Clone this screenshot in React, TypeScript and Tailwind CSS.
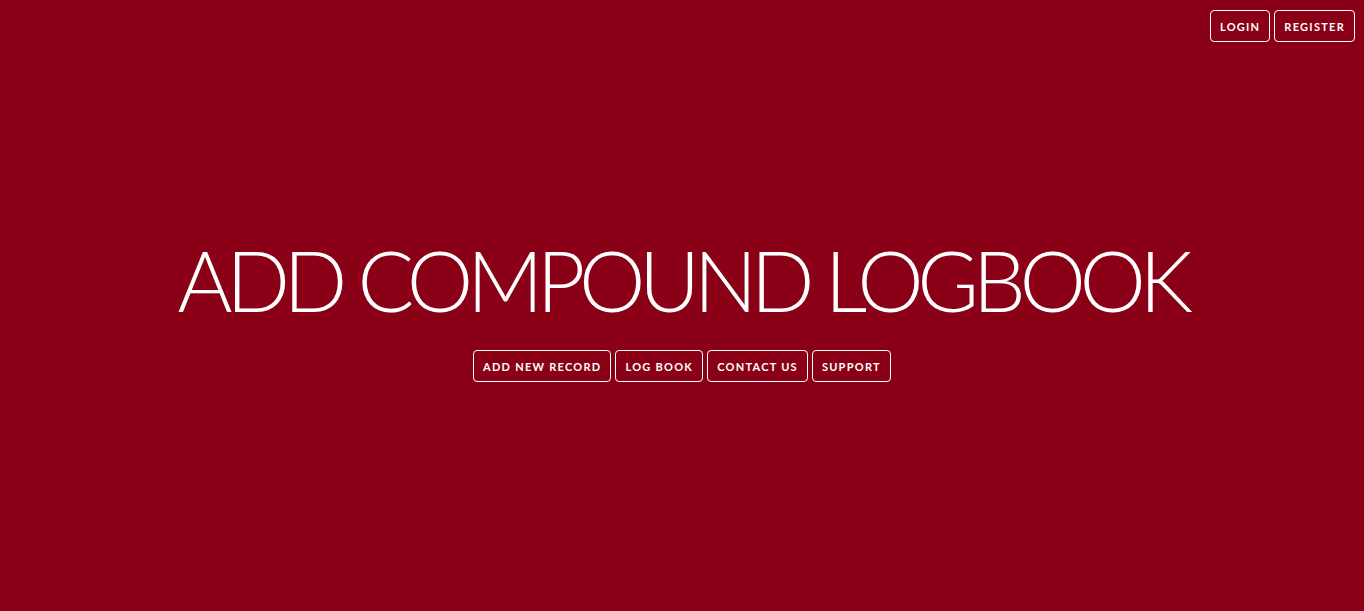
import React from "react";

const btn =
  "h-[32px] px-[9px] border border-white rounded-[4px] text-white text-[11px] font-bold tracking-[0.115em] leading-none flex items-center";

export default function App() {
  return (
    <div
      className="w-full h-[611px] bg-[#8a0016] flex flex-col"
      style={{ fontFamily: "Lato, 'Open Sans', sans-serif" }}
    >
      <div className="flex justify-end gap-[4px] pt-[10px] pr-[9px]">
        <button className={btn}>LOGIN</button>
        <button className={btn}>REGISTER</button>
      </div>
      <div className="flex flex-col items-center mt-[196px]">
        <h1 className="text-white text-[84px] font-light leading-none tracking-[-0.076em]">
          ADD COMPOUND LOGBOOK
        </h1>
        <div className="flex gap-[4px] mt-[28px]">
          <button className={btn}>ADD NEW RECORD</button>
          <button className={btn}>LOG BOOK</button>
          <button className={btn}>CONTACT US</button>
          <button className={btn}>SUPPORT</button>
        </div>
      </div>
    </div>
  );
}
